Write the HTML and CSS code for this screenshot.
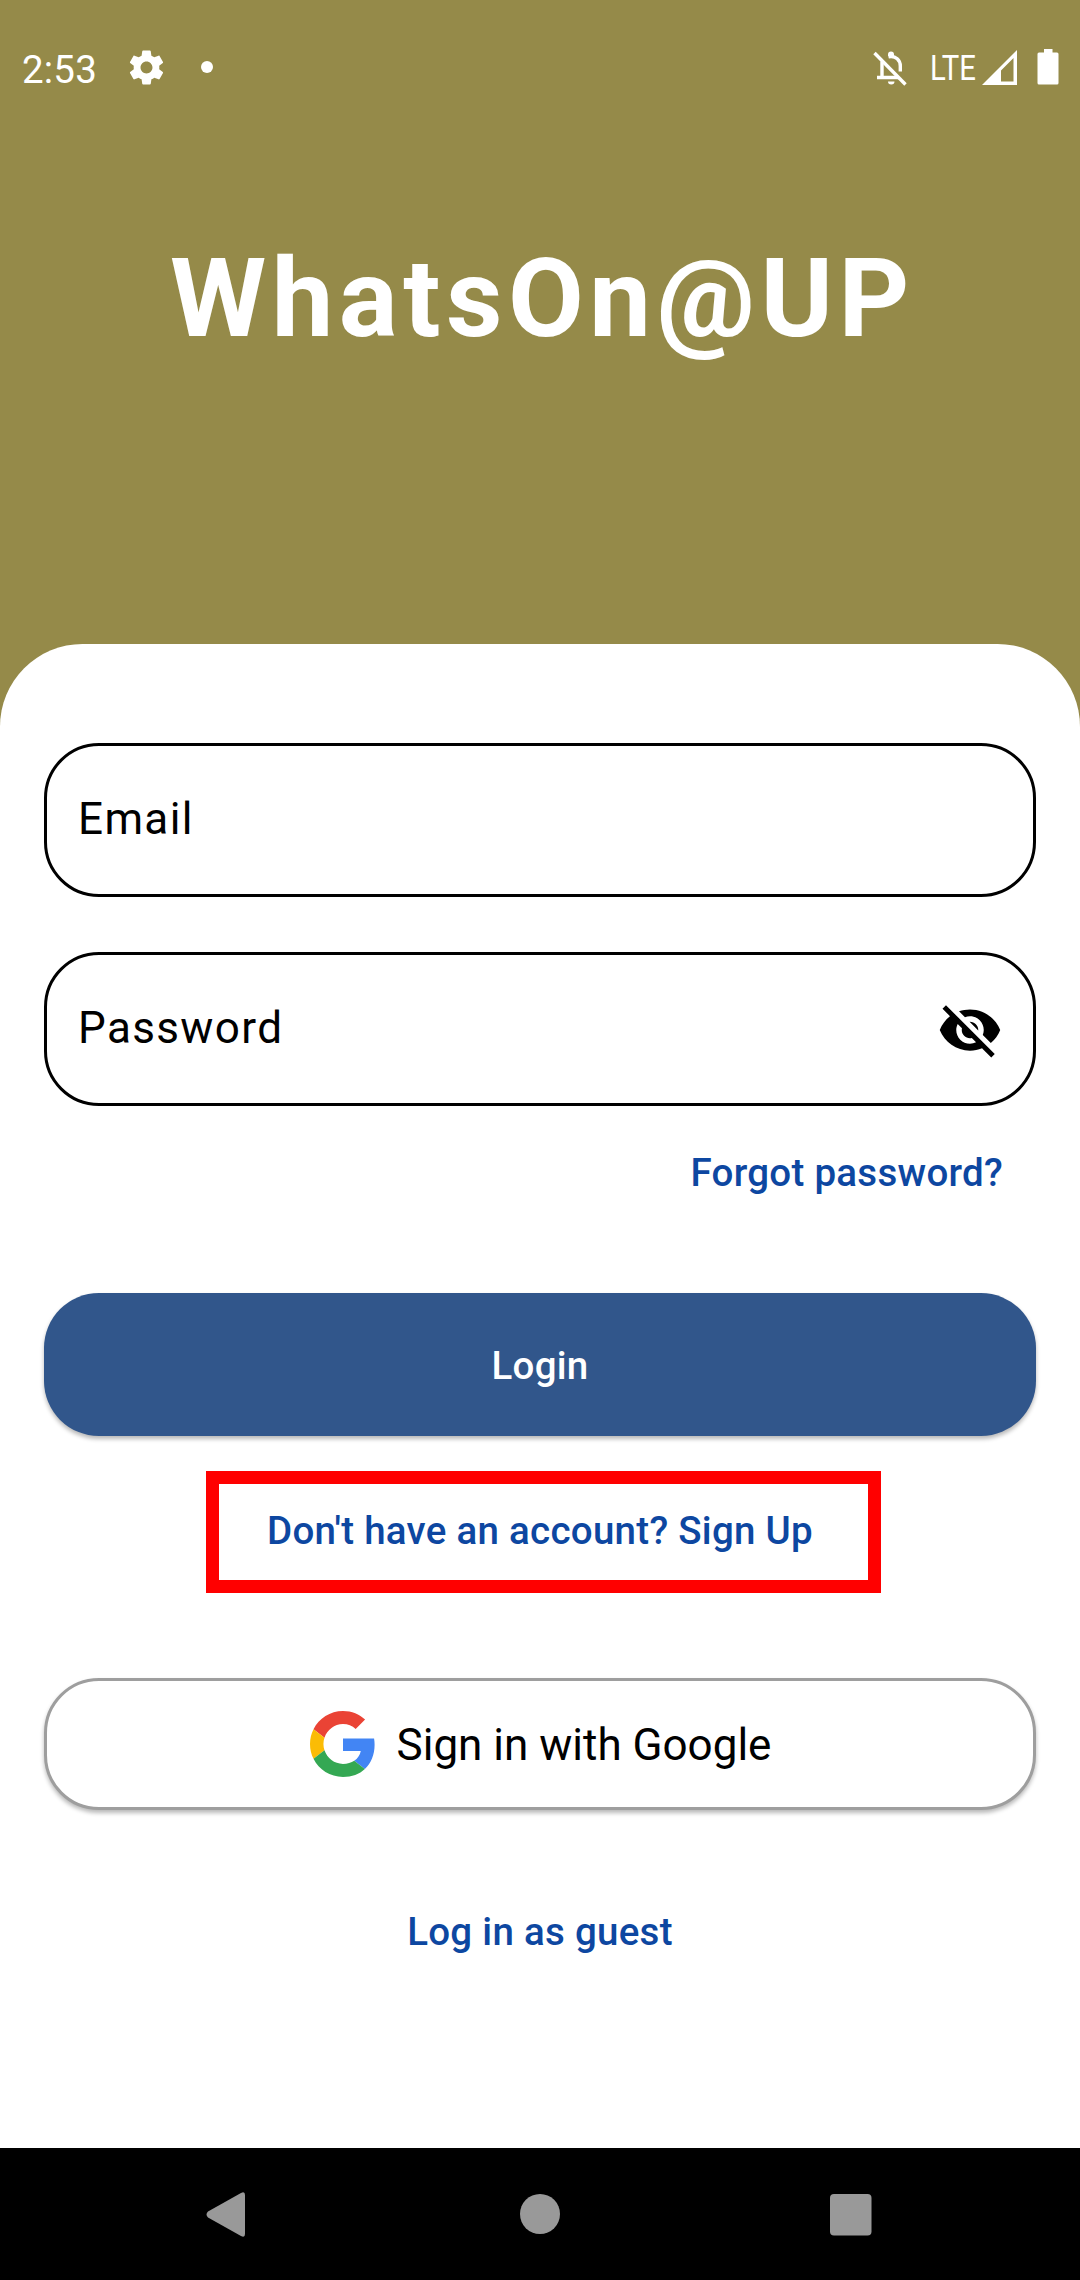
FILE: index.html
```html
<!DOCTYPE html>
<html lang="en">
<head>
<meta charset="utf-8">
<title>WhatsOn@UP</title>
<link rel="stylesheet" href="styles.css">
</head>
<body>
<div class="screen">
  <header class="status">
    <span class="clock">2:53</span>
    <svg class="gear" viewBox="0 0 24 24" width="41" height="41"><path fill="#fff" d="M19.43 12.98c.04-.32.07-.64.07-.98s-.03-.66-.07-.98l2.11-1.65c.19-.15.24-.42.12-.64l-2-3.46c-.12-.22-.39-.3-.61-.22l-2.49 1c-.52-.4-1.08-.73-1.69-.98l-.38-2.65C14.46 2.18 14.25 2 14 2h-4c-.25 0-.46.18-.49.42l-.38 2.65c-.61.25-1.17.59-1.69.98l-2.49-1c-.23-.09-.49 0-.61.22l-2 3.46c-.13.22-.07.49.12.64l2.11 1.65c-.04.32-.07.65-.07.98s.03.66.07.98l-2.11 1.65c-.19.15-.24.42-.12.64l2 3.46c.12.22.39.3.61.22l2.49-1c.52.4 1.08.73 1.69.98l.38 2.65c.03.24.24.42.49.42h4c.25 0 .46-.18.49-.42l.38-2.65c.61-.25 1.17-.59 1.69-.98l2.49 1c.23.09.49 0 .61-.22l2-3.46c.12-.22.07-.49-.12-.64l-2.11-1.65zM12 15.5c-1.93 0-3.500-1.570-3.500-3.500s1.570-3.500 3.500-3.500 3.500 1.570 3.500 3.500-1.570 3.500-3.500 3.500z"/></svg>
    <span class="dot"></span>
    <svg class="bell" viewBox="0 0 34 36" width="34" height="36" fill="none" stroke="#fff" stroke-width="3.4"><path d="M9 11.500V27.500H26M4 27.500H9M15.500 6.800C23 5.200 27.300 10.500 27.300 16V21.500"/><path stroke="none" fill="#fff" d="M15 6V4.500a3 3 0 0 1 6 0V6zM15 31.500h6.500a3.250 3 0 0 1-6.500 0z"/><path d="M1.500 3L32.500 34.500"/></svg>
    <span class="lte">LTE</span>
    <svg class="signal" viewBox="0 0 35 35" width="35" height="35"><path fill="#fff" fill-rule="evenodd" d="M0 35L35 0V35zM19 20.500V31.500H31.500V8z"/></svg>
    <svg class="battery" viewBox="0 0 22 36" width="22" height="36"><path fill="#fff" d="M7 0h8.500v3.500H20a1.500 1.500 0 0 1 1.500 1.500v29a1.500 1.500 0 0 1-1.500 1.500H2A1.500 1.500 0 0 1 .5 34V5A1.500 1.500 0 0 1 2 3.500h5z"/></svg>
  </header>
  <h1 class="title">WhatsOn@UP</h1>
  <main class="card">
    <div class="field"><span>Email</span></div>
    <div class="field password"><span>Password</span>
      <svg viewBox="0 0 24 24" width="66" height="66"><path d="M12 7c2.760 0 5 2.240 5 5 0 .65-.13 1.260-.36 1.830l2.920 2.920c1.510-1.260 2.700-2.890 3.430-4.750-1.730-4.390-6-7.500-11-7.500-1.400 0-2.740.25-3.980.7l2.160 2.160C10.740 7.130 11.350 7 12 7zM2 4.270l2.280 2.280.46.46C3.080 8.300 1.780 10.020 1 12c1.730 4.390 6 7.500 11 7.500 1.550 0 3.030-.3 4.380-.84l.42.42L19.730 22 21 20.730 3.270 3 2 4.270zM7.530 9.800l1.550 1.550c-.05.21-.08.43-.08.65 0 1.660 1.340 3 3 3 .22 0 .44-.03.65-.08l1.550 1.550c-.67.33-1.410.53-2.200.53-2.760 0-5-2.240-5-5 0-.79.2-1.530.53-2.200zm4.310-.78l3.150 3.150.02-.16c0-1.660-1.340-3-3-3l-.17.01z"/></svg>
    </div>
    <a class="link forgot">Forgot password?</a>
    <button class="login">Login</button>
    <div class="highlight"><a class="link">Don't have an account? Sign Up</a></div>
    <button class="google">
      <svg viewBox="0 0 48 48" width="66" height="66"><path fill="#EA4335" d="M24 9.500c3.540 0 6.710 1.220 9.210 3.600l6.850-6.850C35.900 2.380 30.470 0 24 0 14.620 0 6.510 5.380 2.560 13.220l7.980 6.190C12.430 13.720 17.740 9.500 24 9.500z"/><path fill="#4285F4" d="M46.980 24.550c0-1.570-.15-3.090-.38-4.550H24v9.020h12.940c-.58 2.960-2.260 5.480-4.780 7.180l7.730 6c4.510-4.180 7.090-10.360 7.090-17.650z"/><path fill="#FBBC05" d="M10.530 28.590c-.48-1.450-.76-2.990-.76-4.590s.27-3.140.76-4.590l-7.980-6.190C.92 16.460 0 20.120 0 24c0 3.880.92 7.540 2.560 10.780l7.970-6.190z"/><path fill="#34A853" d="M24 48c6.480 0 11.930-2.130 15.890-5.810l-7.730-6c-2.150 1.450-4.920 2.300-8.160 2.300-6.260 0-11.570-4.220-13.470-9.910l-7.980 6.190C6.510 42.620 14.620 48 24 48z"/></svg>
      <span>Sign in with Google</span>
    </button>
    <a class="link guest">Log in as guest</a>
  </main>
  <nav class="nav">
    <svg viewBox="0 0 1080 132" width="1080" height="132" fill="#999"><path d="M208 63.500L241 45Q245 43 245 47V86Q245 90 241 88L208 69.500Q205 66.500 208 63.500z"/><circle cx="540" cy="66" r="20"/><rect x="830" y="46" width="41.500" height="41.500" rx="4"/></svg>
  </nav>
</div>
</body>
</html>
```
FILE: styles.css
```css
* { box-sizing: border-box; }
body { margin: 0; font-family: Roboto, sans-serif; }
.screen { width: 1080px; height: 2280px; background: #958a49; display: flex; flex-direction: column; overflow: hidden; }
.status { height: 136px; display: flex; align-items: center; padding: 0 21px 0 22px; color: #fff; flex: none; }
.clock { font-size: 38.5px; line-height: 46px; width: 104px; margin-top: 3px; letter-spacing: .2px; white-space: nowrap; }
.gear { margin: -1px 0 0 0; }
.dot { width: 12px; height: 12px; border-radius: 50%; background: #fff; margin: -2px auto 0 34px; }
.bell { margin-right: 23px; }
.lte { font-size: 34.5px; width: 53px; transform: scaleX(.85); transform-origin: left; white-space: nowrap; }
.signal { margin: -1px 20px 0 -1px; }
.battery { margin-top: -3px; }
.title { margin: 0; height: 508px; padding: 98px 0 0 5px; color: #fff; font-size: 110px; line-height: 129px; font-weight: 700; text-align: center; letter-spacing: 5.5px; flex: none; }
.card { height: 1504px; flex: none; background: #fff; border-radius: 82.5px 82.5px 0 0; padding: 99px 44px 0; display: flex; flex-direction: column; align-items: center; }
.field { width: 992px; height: 154px; flex: none; border: 3px solid #000; border-radius: 55px; padding: 0 30px 0 31px; display: flex; align-items: center; justify-content: space-between; font-size: 44px; line-height: 52px; letter-spacing: 1.375px; }
.field span { margin-top: -3px; }
.field svg { margin-top: 1px; }
.password { margin-top: 55px; }
.link { color: #0d47a1; font-size: 38.5px; line-height: 46px; font-weight: 500; letter-spacing: .275px; white-space: nowrap; }
.forgot { align-self: flex-end; margin: 44px 33px 0 0; }
.login, .google { width: 992px; flex: none; border-radius: 55px; font-family: inherit; display: flex; align-items: center; justify-content: center; padding: 0; }
.login { height: 143px; border: 0; margin-top: 97px; padding-top: 2px; background: #31568b; color: #fff; font-size: 38.5px; font-weight: 500; letter-spacing: .275px; box-shadow: 0 3px 4px rgba(0,0,0,.28); }
.highlight { width: 675px; height: 122px; margin: 35px 0 0 7px; border: 13px solid #f00; display: flex; justify-content: center; padding: 24px 7px 0 0; flex: none; }
.google { height: 132px; margin-top: 85px; border: 3px solid #9e9e9e; background: #fff; color: #000; font-size: 44px; gap: 21px; padding-left: 1px; box-shadow: 0 3px 4px rgba(0,0,0,.28); }
.google span { margin-top: 2px; }
.guest { margin-top: 99px; }
.nav { height: 132px; background: #000; flex: none; }
.nav svg { display: block; }
```
